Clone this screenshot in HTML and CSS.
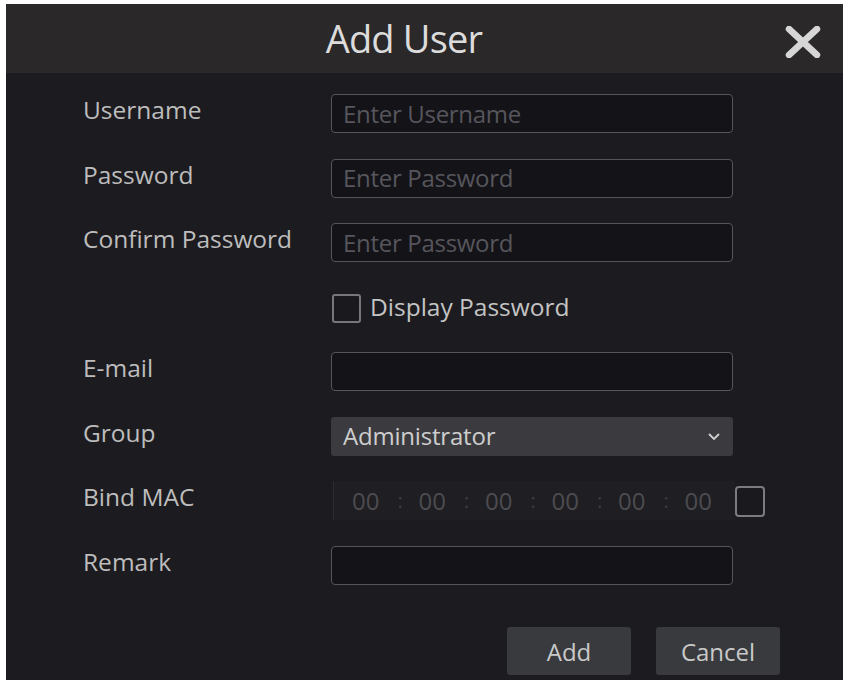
FILE: index.html
```html
<!DOCTYPE html>
<html>
<head>
<meta charset="utf-8">
<link rel="stylesheet" href="styles.css">
</head>
<body>
<div class="dialog">
  <div class="header">
    <div class="title">Add User</div>
    <button class="close" aria-label="Close">
      <svg width="36" height="32" viewBox="0 0 36 32"><path d="M4 3 L32 29 M32 3 L4 29" stroke="#d6d6d6" stroke-width="6.5" stroke-linecap="round"/></svg>
    </button>
  </div>
  <div class="body">
    <div class="row">
      <div class="label">Username</div>
      <div class="field"><span class="ph">Enter Username</span></div>
    </div>
    <div class="row">
      <div class="label">Password</div>
      <div class="field"><span class="ph">Enter Password</span></div>
    </div>
    <div class="row">
      <div class="label">Confirm Password</div>
      <div class="field"><span class="ph">Enter Password</span></div>
    </div>
    <div class="row">
      <div class="label"></div>
      <div class="check-line"><span class="box"></span><span class="check-text">Display Password</span></div>
    </div>
    <div class="row">
      <div class="label">E-mail</div>
      <div class="field"></div>
    </div>
    <div class="row">
      <div class="label">Group</div>
      <div class="select"><span>Administrator</span>
        <svg width="14" height="9" viewBox="0 0 14 9"><path d="M2 2 L7 7 L12 2" fill="none" stroke="#cfcfcf" stroke-width="1.8"/></svg>
      </div>
    </div>
    <div class="row">
      <div class="label">Bind MAC</div>
      <div class="mac">
        <span class="oct">00</span><span class="sep">:</span>
        <span class="oct">00</span><span class="sep">:</span>
        <span class="oct">00</span><span class="sep">:</span>
        <span class="oct">00</span><span class="sep">:</span>
        <span class="oct">00</span><span class="sep">:</span>
        <span class="oct">00</span>
      </div>
      <span class="box mac-box"></span>
    </div>
    <div class="row">
      <div class="label">Remark</div>
      <div class="field"></div>
    </div>
    <div class="footer">
      <button class="btn">Add</button>
      <button class="btn">Cancel</button>
    </div>
  </div>
</div>
</body>
</html>
```

FILE: styles.css
```css
html, body {
  margin: 0;
  padding: 0;
  background: #ffffff;
}
body {
  width: 848px;
  height: 684px;
  overflow: hidden;
  font-family: "Open Sans", "Noto Sans", sans-serif;
}
.dialog {
  margin: 4px 5px 0 6px;
  width: 837px;
  height: 676px;
  background: #1c1b1f;
  display: flex;
  flex-direction: column;
}
.header {
  height: 69px;
  background: #2a2828;
  display: flex;
  align-items: center;
  justify-content: center;
  position: relative;
}
.title {
  color: #dcdcdc;
  font-size: 38px;
  letter-spacing: -0.8px;
  margin-left: -41px;
  margin-top: -2px;
  line-height: 50px;
}
.close {
  position: absolute;
  right: 22px;
  top: 22px;
  background: none;
  border: 0;
  padding: 0;
  width: 36px;
  height: 32px;
}
.close svg { display: block; }
.body {
  flex: 1;
  padding: 21px 0 0 77px;
  display: flex;
  flex-direction: column;
}
.row {
  height: 64.5px;
  display: flex;
  align-items: flex-start;
}
.label {
  width: 248px;
  color: #bdbdbd;
  font-size: 24.5px;
  line-height: 30px;
  margin-top: 1px;
  letter-spacing: 0;
}
.field {
  width: 402px;
  height: 39px;
  box-sizing: border-box;
  border: 1.5px solid #55555a;
  border-radius: 4px;
  background: #141318;
  display: flex;
  align-items: center;
  padding-left: 11px;
}
.ph {
  color: #56565c;
  font-size: 24px;
  letter-spacing: -0.3px;
  line-height: 30px;
}
.check-line {
  display: flex;
  align-items: center;
  height: 39px;
  margin-top: 1px;
}
.box {
  width: 29px;
  height: 29px;
  box-sizing: border-box;
  border: 2px solid #77777b;
  border-radius: 3px;
  margin-left: 1px;
  background: #1a191d;
}
.check-text {
  margin-left: 9px;
  color: #c4c4c4;
  font-size: 24.5px;
  letter-spacing: 0;
  line-height: 30px;
  margin-top: -2px;
}
.select {
  width: 402px;
  height: 39px;
  box-sizing: border-box;
  background: #3b3b3f;
  border-radius: 3px;
  display: flex;
  align-items: center;
  justify-content: space-between;
  padding: 0 12px 0 12px;
  color: #cdcdcd;
  font-size: 24px;
  letter-spacing: -0.2px;
}
.select span { margin-top: -1px; line-height: 30px; }
.mac {
  width: 402px;
  height: 39px;
  box-sizing: border-box;
  margin-left: 2px;
  background: #1f1e22;
  border-left: 1px solid #2c2b30;
  display: flex;
  align-items: center;
  padding-left: 18px;
  color: #4c4c50;
  font-size: 24px;
  line-height: 30px;
}
.oct { width: 30px; text-align: left; }
.sep { width: 36.5px; text-align: center; color: #3e3e42; font-size: 20px; }
.mac-box {
  width: 30px;
  height: 31px;
  margin: 5px 0 0 0;
  border-color: #7c7c80;
  border-radius: 4px;
}
.footer {
  margin-top: 17px;
  display: flex;
  justify-content: flex-end;
  gap: 25px;
  padding-right: 63px;
}
.btn {
  width: 124px;
  height: 48px;
  background: #393a3e;
  border: 0;
  border-radius: 3px;
  color: #c9c9c9;
  font-family: "Open Sans", "Noto Sans", sans-serif;
  font-size: 24px;
  padding: 0;
}
```
